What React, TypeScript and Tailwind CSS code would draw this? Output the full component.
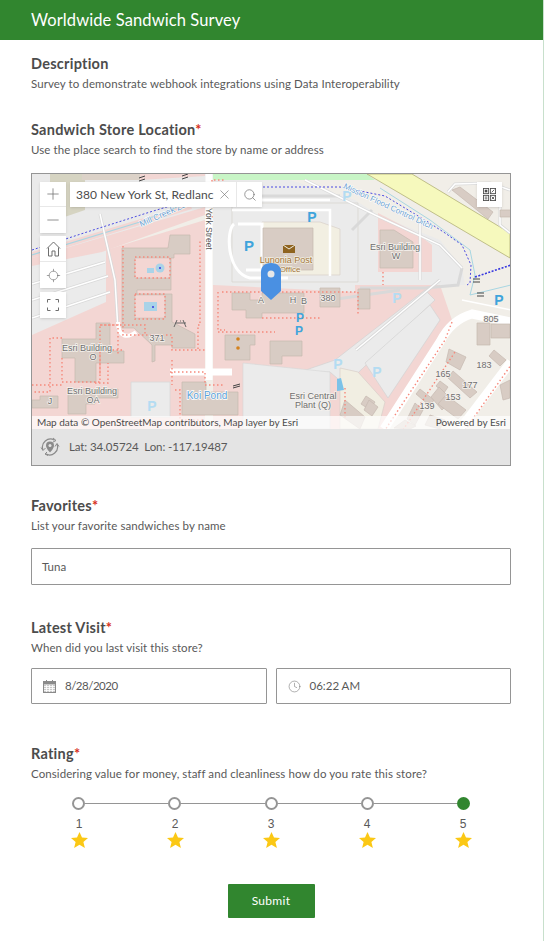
import { Clock, Locate, Minus, Plus, Search, X } from "lucide-react";

const FONT = { fontFamily: '"Lato", "Noto Sans", sans-serif' };

const PARKING: [number, number, string, number][] = [
  [249, 251, "#3fa4dc", 15],
  [312, 222, "#3fa4dc", 14],
  [347, 201, "#b4dcf2", 14],
  [397, 303, "#b4dcf2", 14],
  [499, 305, "#3fa4dc", 14],
  [300, 322, "#3fa4dc", 12],
  [299, 335, "#3fa4dc", 12],
  [338, 369, "#b4dcf2", 14],
  [377, 377, "#b4dcf2", 14],
  [152, 411, "#b4dcf2", 14],
];

const LABELS: [number, number, string][] = [
  [395, 250, "Esri Building"],
  [396, 259, "W"],
  [87, 351, "Esri Building"],
  [93, 360, "O"],
  [92, 394, "Esri Building"],
  [93, 403, "OA"],
  [50, 404, "J"],
  [157, 341, "371"],
  [261, 303, "A"],
  [293, 303, "H"],
  [304, 304, "B"],
  [328, 301, "380"],
  [491, 322, "805"],
  [484, 368, "183"],
  [443, 377, "165"],
  [470, 388, "177"],
  [453, 400, "153"],
  [427, 409, "139"],
  [313, 399, "Esri Central"],
  [313, 408, "Plant (Q)"],
];

const BUILDINGS = [
  "122,248 168,248 170,235 190,235 190,254 174,254 174,258 171,258 171,290 137,290 137,294 172,294 172,322 195,334 195,348 172,348 172,345 155,345 155,361 152,362 152,345 134,328 122,328",
  "62,339 96,339 96,323 110,323 110,351 124,351 124,363 96,363 96,382 75,382 75,358 62,358",
  "68,389 118,389 118,398 95,398 95,404 86,404 86,414 68,414",
  "40,396 58,396 58,408 32,408 32,400 40,400",
  "225,335 255,335 255,345 250,345 250,360 225,360",
  "182,382 206,382 206,392 238,392 238,415 182,415",
  "263,228 313,228 313,270 263,270",
  "380,230 394,230 413,242 413,268 380,268",
  "232,293 250,293 250,300 262,300 262,293 304,293 304,313 262,313 262,318 246,318 246,310 232,310",
  "320,288 340,288 340,307 320,307",
  "358,289 370,289 370,309 358,309",
  "270,341 302,341 302,356 282,356 282,364 270,364",
  "452,190 460,187 493,212 488,219",
  "500,210 511,210 511,217 500,217",
  "477,323 490,323 490,345 477,345",
  "491,324 510,324 510,338 491,338",
  "449,349 466,357 460,370 446,362",
  "494,350 506,360 500,366 489,356",
  "453,371 477,392 470,398 448,378",
  "440,381 448,387 444,393 436,386",
  "420,389 434,400 430,406 416,394",
  "439,387 452,400 442,410 431,397",
  "446,395 466,410 458,419 438,404",
  "415,403 423,410 415,425 407,419",
  "430,415 445,420 440,429 425,425",
  "345,400 365,417 360,429 340,415",
  "366,396 375,402 370,410 361,404",
  "369,400 378,407 372,416 364,410",
  "394,428 405,420 416,426 410,429",
  "500,385 510,380 510,398 503,400",
];

const COURTYARDS = [
  "135,258 170,258 170,278 135,278",
  "135,295 165,295 165,318 135,318",
];

const PATHS = [
  "M123 246V335H172V350H198V325H200V240",
  "M135 257H170V278H135Z",
  "M135 294H165V319H135Z",
  "M62 338H50V392H32M62 358V382H100V325H118V355",
  "M95 383H108V363M100 325H145V335",
  "M175 350H205M172 360V385",
  "M218 292V330H225M218 332H275M222 292H358V316M262 318H320",
  "M175 390H180V420H205M170 372H205V385H225",
  "M383 272V285",
  "M375 430H385L445 340L452 322",
  "M403 430L455 352",
  "M465 430L511 365",
  "M345 388V420",
  "M122 350H100V375M32 385H62",
  "M212 180V220M214 180H225",
];

// Street map drawn in page coordinates, the box starts at (32,174)
function MapDrawing() {
  return (
    <svg viewBox="32 174 478 255" className="block h-full w-full" style={{ fontFamily: '"Liberation Sans", sans-serif' }}>
      <rect x="32" y="174" width="478" height="255" fill="#f1eee8" />
      <polygon points="213,174 367,174 375,180 213,180" fill="#c8f5c6" />
      <polygon points="367,174 412,174 510,233 510,258" fill="#f6f9bd" stroke="#a9a86a" strokeWidth="0.7" />
      <polygon points="32,174 213,174 213,210 110,245 32,270" fill="#eaeaea" />
      <polygon points="50,174 85,174 85,210 50,222" fill="#d6d4c2" />
      <polygon points="82,174 140,174 140,180 82,180" fill="#dcd2c8" />
      <polygon points="140,174 205,174 205,176 140,180" fill="#f2d6d3" />
      <polygon points="32,270 110,245 115,300 32,335" fill="#ebebeb" />
      <polygon points="106,250 205,220 205,429 32,429 32,335 106,302" fill="#f3d6d3" />
      <polygon points="213,285 440,285 452,320 392,412 385,429 213,429" fill="#f3d6d3" />
      <polygon points="213,180 290,180 355,200 378,215 440,240 462,268 465,285 355,285 355,292 213,285" fill="#ebebeb" />
      <polygon points="232,203 358,203 358,282 232,282" fill="#ebebeb" stroke="#d6d2cc" strokeWidth="0.7" />
      <polygon points="262,222 320,222 340,229 340,275 262,275" fill="#f2efe2" stroke="#d9d0c8" strokeWidth="0.7" />
      <polygon points="378,213 415,232 432,245 432,272 378,272" fill="#f3d6d3" />
      <polygon points="102,252 205,215 205,207 32,258 32,266" fill="#f3d6d3" />
      <polygon points="32,252 190,204 192,209 32,258" fill="#f3d6d3" />
      <polyline points="32,255 140,222 175,208 190,198" fill="none" stroke="#a8d6e2" strokeWidth="1.2" />
      <polyline points="380,188 430,220 470,250 475,275 470,295 511,285" fill="none" stroke="#a8d6e2" strokeWidth="1" />
      <polygon points="300,372 335,360 425,290 435,300 345,385 330,372" fill="#ebebeb" stroke="#d2d2d2" strokeWidth="0.7" />
      <polygon points="365,363 430,305 440,320 388,398" fill="#ebebeb" stroke="#d2d2d2" strokeWidth="0.7" />
      <polygon points="340,368 358,372 385,402 378,429 340,429" fill="#f1eee2" stroke="#d9cfc8" strokeWidth="0.7" />
      <polygon points="243,363 330,372 330,429 243,429" fill="#ebebeb" stroke="#d8d8d8" strokeWidth="0.7" />
      <polygon points="131,382 170,382 170,417 131,417" fill="#ebebeb" stroke="#d8d8d8" strokeWidth="0.8" />
      <g fill="none" stroke="#d9d9d9" strokeWidth="3">
        <path d="M32 284L105 262M32 300L108 276M32 318L110 292" />
        <path d="M100 214L115 280L118 330" />
        <path d="M250 196H340M352 230L372 210" />
        <path d="M305 180L375 215L440 245L462 268" />
        <path d="M462 268L458 285L425 288H360" />
        <path d="M420 220V280" />
        <path d="M330 300L400 290M356 350L440 280" />
        <path d="M448 192L455 184L490 183L510 190M500 195V225L510 233" />
      </g>
      <g fill="none" stroke="#fff" strokeWidth="1.5">
        <path d="M32 284L105 262M32 300L108 276M32 318L110 292" />
        <path d="M100 214L115 280L118 330" />
        <path d="M305 180L375 215L440 245L462 268" />
        <path d="M420 220V280M356 350L440 280" />
        <path d="M462 300L511 310" />
        <path d="M448 192L455 184L490 183L510 190M500 195V225L510 233" />
      </g>
      <path d="M209 174V380M170 372H232" fill="none" stroke="#fff" strokeWidth="7" />
      <path d="M232 210H330V276M213 200H330" fill="none" stroke="#fff" strokeWidth="2.5" />
      <path d="M234 224C226 230 226 272 250 278H288M238 224H262V270H246" fill="none" stroke="#fff" strokeWidth="3" />
      <path d="M118 322C118 338 128 338 136 332" fill="none" stroke="#fff" strokeWidth="4" />
      <path d="M384 429L440 342C448 326 458 318 472 314L511 322" fill="none" stroke="#fff" strokeWidth="9" />
      <path d="M460 429L511 362" fill="none" stroke="#fff" strokeWidth="9" />
      {BUILDINGS.map((b) => (
        <polygon key={b} points={b} fill="#d8ccc4" stroke="#c6b9b0" strokeWidth="0.7" />
      ))}
      {COURTYARDS.map((c) => (
        <polygon key={c} points={c} fill="#f3d6d3" stroke="#c6b9b0" strokeWidth="0.5" />
      ))}
      <path d={PATHS.join("")} fill="none" stroke="#f6897b" strokeWidth="1.4" strokeDasharray="1.5 2.5" />
      <polyline points="32,250 90,231 150,212 190,200" fill="none" stroke="#3838e0" strokeWidth="0.9" strokeDasharray="2 2" />
      <polyline points="215,187 340,187 385,196 428,222 445,233 462,245 471,265 470,283 467,285" fill="none" stroke="#3838e0" strokeWidth="0.9" strokeDasharray="2 2" />
      <polyline points="475,277 511,265" fill="none" stroke="#3838e0" strokeWidth="1.6" strokeDasharray="2 1.5" />
      <circle cx="160" cy="268" r="4.5" fill="#a9d3e8" />
      <circle cx="160" cy="268" r="1" fill="#3838e0" />
      <rect x="147" y="268" width="7" height="5" fill="#a9d3e8" />
      <rect x="144" y="302" width="13" height="9" fill="#a9d3e8" />
      <circle cx="153" cy="307" r="1" fill="#3838e0" />
      <circle cx="238" cy="339" r="1.8" fill="#d4821e" />
      <circle cx="238" cy="348" r="1.8" fill="#d4821e" />
      <path d="M337 379L341 378L344 390L337 391Z" fill="#7cc2e8" />
      <path d="M180 321H181M177 320L174 327M183 320L186 327M175 323H186" stroke="#666" strokeWidth="1" fill="none" />
      <path d="M473 279L480 279M473 282L480 282M477 293L484 293M477 296L484 296M139 178L145 176M139 181L145 179M182 176L188 174M182 179L188 177M233 386L240 384M233 388L240 386" stroke="#444" strokeWidth="1" fill="none" />
      <rect x="283" y="245" width="12" height="8" fill="#8f6420" />
      <path d="M283 245L289 249L295 245" fill="none" stroke="#f2efe2" strokeWidth="1" />
      {PARKING.map(([x, y, color, size]) => (
        <text key={`${x}-${y}`} x={x} y={y} fontSize={size} fontWeight="700" fill={color} textAnchor="middle">P</text>
      ))}
      {LABELS.map(([x, y, t]) => (
        <text key={`${x}-${y}`} x={x} y={y} fontSize="9" fill="#6e6e6e" textAnchor="middle" stroke="#f5f2ee" strokeWidth="1.5" paintOrder="stroke">{t}</text>
      ))}
      <text x="286" y="263" fontSize="9" fill="#a3743b" textAnchor="middle" stroke="#f2efe2" strokeWidth="1.5" paintOrder="stroke">Lunonia Post</text>
      <text x="290" y="272" fontSize="8" fill="#a3743b" textAnchor="middle" stroke="#f2efe2" strokeWidth="1.5" paintOrder="stroke">Office</text>
      <text x="207" y="399" fontSize="10" fill="#5aa0d8" textAnchor="middle" stroke="#fff" strokeWidth="1.5" paintOrder="stroke">Koi Pond</text>
      <text x="0" y="0" fontSize="8.5" fill="#6c9fd0" transform="translate(141 227) rotate(-24)" stroke="#fff" strokeWidth="1.2" paintOrder="stroke">Mill Creek Zanja</text>
      <text x="0" y="0" fontSize="8" fill="#6c9fd0" transform="translate(343 188) rotate(25)" stroke="#fff" strokeWidth="1.2" paintOrder="stroke">Mission Flood Control Ditch</text>
      <text x="0" y="0" fontSize="8.5" fill="#555" transform="translate(206 208) rotate(90)" stroke="#fff" strokeWidth="1.2" paintOrder="stroke">York Street</text>
    </svg>
  );
}

function HomeIcon() {
  return (
    <svg width="15" height="16" viewBox="0 0 15 16" fill="none" stroke="#6e6e6e" strokeWidth="1">
      <path d="M1 7.5L7.5 1L14 7.5M2.5 6.5V15H6V10H9V15H12.5V6.5" />
    </svg>
  );
}

function FullscreenIcon() {
  return (
    <svg width="12" height="12" viewBox="0 0 12 12" fill="none" stroke="#6e6e6e" strokeWidth="1">
      <path d="M.5 3.5V.5H3.5M8.5 .5H11.5V3.5M11.5 8.5V11.5H8.5M3.5 11.5H.5V8.5" />
    </svg>
  );
}

function QrIcon() {
  return (
    <svg width="13" height="13" viewBox="0 0 15 15" fill="none" stroke="#4c4c4c" strokeWidth="1">
      <rect x=".5" y=".5" width="6" height="6" />
      <rect x="8.5" y=".5" width="6" height="6" />
      <rect x=".5" y="8.5" width="6" height="6" />
      <rect x="8.5" y="8.5" width="6" height="6" />
      <rect x="2" y="2" width="3" height="3" fill="#4c4c4c" stroke="none" />
      <path d="M10 5L13 2M2 10.5H5M2 12.5H5M10 10L13 13M13 10L10 13" />
    </svg>
  );
}

function LocationSyncIcon() {
  return (
    <svg width="20" height="20" viewBox="0 0 20 20" fill="none" stroke="#8a8a8a">
      <path d="M3 13A8 8 0 0 1 14.5 3.2M17 7A8 8 0 0 1 5.5 16.8" strokeWidth="1.2" />
      <path d="M13 1L16 3.5L12.8 5.2M1 10.5L3 13.5L5.5 11M15 9.5L17 6.5L19 9.5M7 15L5 17L8 18.5" strokeWidth="1" />
      <path d="M10 4.5A4 4 0 0 1 14 8.5C14 11.5 10 15.5 10 15.5C10 15.5 6 11.5 6 8.5A4 4 0 0 1 10 4.5Z" fill="#8a8a8a" stroke="none" />
      <circle cx="10" cy="8.5" r="1.5" fill="#e4e4e4" stroke="none" />
    </svg>
  );
}

function CalendarIcon() {
  return (
    <svg width="13" height="13" viewBox="0 0 13 13">
      <rect x="0.5" y="1.5" width="12" height="11" fill="#c8c8c8" stroke="#8a8a8a" />
      <rect x="0.5" y="1.5" width="12" height="2.5" fill="#8a8a8a" />
      <rect x="3" y="0" width="1" height="2.5" fill="#8a8a8a" />
      <rect x="9" y="0" width="1" height="2.5" fill="#8a8a8a" />
      <path d="M1 6.5H12M1 8.5H12M1 10.5H12M3.5 5V12M6.5 5V12M9.5 5V12" stroke="#fff" strokeWidth="0.8" />
    </svg>
  );
}

function StarIcon() {
  return (
    <svg width="17" height="16" viewBox="0 0 17 16">
      <polygon points="8.5,0 11,5.6 17,6.1 12.4,10 13.9,16 8.5,12.8 3.1,16 4.6,10 0,6.1 6,5.6" fill="#fbc815" />
    </svg>
  );
}

function Heading({ title, hint, required = true }: { title: string; hint: string; required?: boolean }) {
  return (
    <div>
      <h2 className="text-[14.5px] leading-[20px] font-bold tracking-[0.25px] text-[#4c4c4c]">
        {title}
        {required && <span className="text-[#d83020]">*</span>}
      </h2>
      <p className="mt-[1px] text-[11.5px] leading-[17px] tracking-[0.08px] text-[#595959]">{hint}</p>
    </div>
  );
}

export default function App() {
  return (
    <div className="flex h-[941px] w-[544px] overflow-hidden bg-white" style={FONT}>
      <div className="flex w-[543px] flex-col">
        <header className="flex h-[40px] shrink-0 items-center bg-[#31862f] pl-[31px] text-[16.5px] tracking-[0.1px] text-white">
          Worldwide Sandwich Survey
        </header>

        <main className="flex flex-col pr-[32px] pl-[31px]">
          <section className="mt-[14px]">
            <Heading title="Description" hint="Survey to demonstrate webhook integrations using Data Interoperability" required={false} />
          </section>

          <section className="mt-[28px]">
            <Heading title="Sandwich Store Location" hint="Use the place search to find the store by name or address" />
            <div className="mt-[15px] border border-[#959595]">
              <div className="relative h-[255px] overflow-hidden">
                <MapDrawing />

                <div className="absolute top-[8px] left-[8px] flex w-[26px] flex-col gap-[3px]">
                  <div className="flex flex-col divide-y divide-[#e8e8e8] bg-white shadow-sm">
                    <div className="flex h-[25px] items-center justify-center"><Plus size={18} strokeWidth={1} color="#6e6e6e" /></div>
                    <div className="flex h-[26px] items-center justify-center"><Minus size={18} strokeWidth={1} color="#6e6e6e" /></div>
                  </div>
                  <div className="flex flex-col divide-y divide-[#e8e8e8] bg-white shadow-sm">
                    <div className="flex h-[26px] items-center justify-center"><HomeIcon /></div>
                    <div className="flex h-[26px] items-center justify-center"><Locate size={15} strokeWidth={1} color="#6e6e6e" /></div>
                  </div>
                  <div className="mt-[1px] flex h-[26px] items-center justify-center bg-white shadow-sm"><FullscreenIcon /></div>
                </div>

                <div className="absolute top-[8px] left-[38px] flex h-[25px] w-[192px] items-center bg-white shadow-sm">
                  <span className="w-[143px] pl-[6px] text-[12px] tracking-[0.1px] whitespace-nowrap text-[#4c4c4c]">380 New York St, Redlanc</span>
                  <span className="flex w-[23px] justify-center"><X size={15} strokeWidth={1} color="#6e6e6e" /></span>
                  <span className="flex h-full w-[26px] items-center justify-center border-l border-[#e8e8e8]"><Search size={14} strokeWidth={1.2} color="#6e6e6e" /></span>
                </div>

                <div className="absolute top-[8px] right-[8px] flex h-[25px] w-[25px] items-center justify-center bg-white shadow-sm">
                  <QrIcon />
                </div>

                <svg className="absolute top-[89px] left-[229px]" width="20" height="37" viewBox="0 0 20 37">
                  <path d="M10 0C17 0 20 4 20 9V28L10 37L0 28V9C0 4 3 0 10 0Z" fill="#4a90e2" />
                  <circle cx="10" cy="11" r="3.5" fill="#e8e8e8" />
                </svg>

                <div className="absolute right-0 bottom-0 left-0 flex h-[13px] items-center justify-between bg-white/70 pr-[4px] pl-[5px] text-[10px] text-[#4c4c4c]">
                  <span>Map data © OpenStreetMap contributors, Map layer by Esri</span>
                  <span>Powered by Esri</span>
                </div>
              </div>

              <div className="flex h-[36px] items-center gap-[9px] bg-[#e4e4e4] pl-[8px] text-[11.5px] tracking-[-0.1px] text-[#595959]">
                <LocationSyncIcon />
                <span className="whitespace-pre">Lat: 34.05724  Lon: -117.19487</span>
              </div>
            </div>
          </section>

          <section className="mt-[30px]">
            <Heading title="Favorites" hint="List your favorite sandwiches by name" />
            <div className="mt-[14px] flex h-[37px] items-center rounded-[1px] border border-[#959595] pl-[10px] text-[11.5px] text-[#595959]">Tuna</div>
          </section>

          <section className="mt-[33px]">
            <Heading title="Latest Visit" hint="When did you last visit this store?" />
            <div className="mt-[12px] grid grid-cols-2 gap-[9px]">
              <div className="flex h-[36px] items-center gap-[9px] rounded-[1px] border border-[#959595] pl-[11px] text-[11.5px] text-[#595959]">
                <CalendarIcon />
                <span className="tracking-[-0.5px]">8/28/2020</span>
              </div>
              <div className="flex h-[36px] items-center gap-[9px] rounded-[1px] border border-[#959595] pl-[11px] text-[11.5px] text-[#595959]">
                <Clock size={13} strokeWidth={1} color="#6e6e6e" />
                <span>06:22 AM</span>
              </div>
            </div>
          </section>

          <section className="mt-[40px]">
            <Heading title="Rating" hint="Considering value for money, staff and cleanliness how do you rate this store?" />
            <div className="mt-[15px] flex items-center pr-[41px] pl-[41px]">
              {[1, 2, 3, 4].map((n) => (
                <div key={n} className="flex flex-1 items-center">
                  <span className="h-[13px] w-[13px] shrink-0 rounded-full border-2 border-[#959595] bg-white" />
                  <span className="h-[1px] flex-1 bg-[#959595]" />
                </div>
              ))}
              <span className="h-[13px] w-[13px] shrink-0 rounded-full bg-[#31862f]" />
            </div>
            <div className="mt-[7px] flex justify-between pr-[38px] pl-[38px]">
              {[1, 2, 3, 4, 5].map((n) => (
                <div key={n} className="flex w-[20px] flex-col items-center text-[12px] leading-[15px] text-[#595959]" style={{ fontFamily: '"Liberation Sans", sans-serif' }}>
                  <span>{n}</span>
                  <StarIcon />
                </div>
              ))}
            </div>
            <div className="mt-[36px] flex justify-center">
              <button type="button" className="h-[34px] w-[87px] rounded-[1px] bg-[#31862f] text-[12px] tracking-[0.3px] text-white">Submit</button>
            </div>
          </section>
        </main>
      </div>
      <div className="w-[1px] bg-[#c8e0cc]" />
    </div>
  );
}
